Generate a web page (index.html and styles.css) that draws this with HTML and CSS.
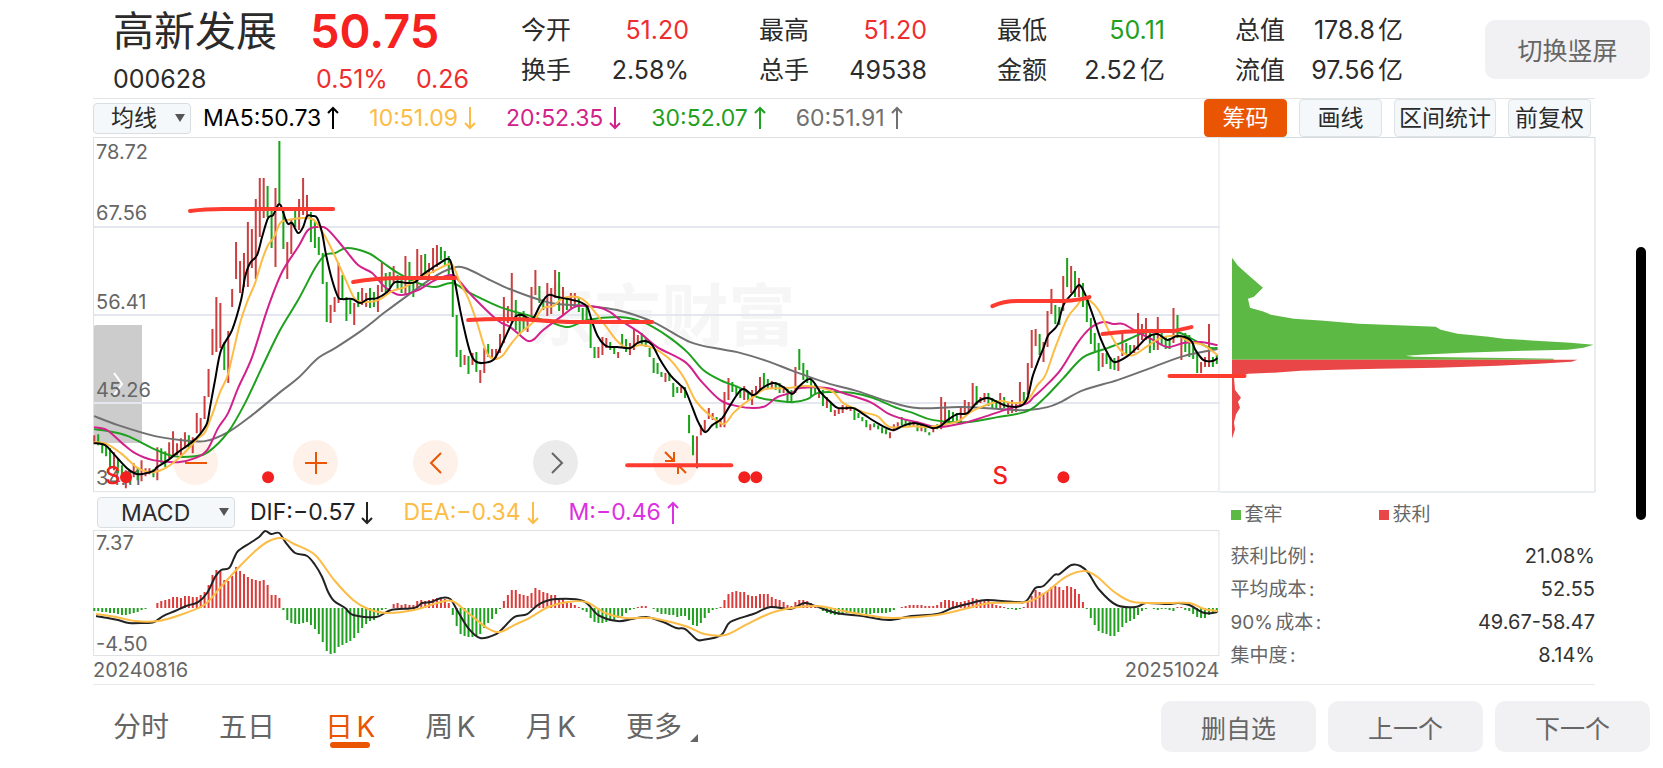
FILE: index.html
```html
<!DOCTYPE html>
<html lang="zh-CN">
  <head>
    <meta charset="UTF-8" />
    <meta name="viewport" content="width=device-width, initial-scale=1.0" />
    <title>高新发展 000628</title>
    <link rel="stylesheet" href="styles.css">
  </head>

  <body>
    <!-- 顶部行情 -->
    <header class="header">
      <div class="stock">
        <h1 class="stock__name">高新发展</h1>
        <strong class="stock__price">50.75</strong>
        <span class="stock__code">000628</span>
        <span class="stock__change"><span>0.51%</span><span>0.26</span></span>
      </div>
      <dl class="quotes">
        <div class="quote"><dt>今开</dt><dd class="up">51.20</dd></div>
        <div class="quote"><dt>最高</dt><dd class="up">51.20</dd></div>
        <div class="quote"><dt>最低</dt><dd class="down">50.11</dd></div>
        <div class="quote"><dt>总值</dt><dd>178.8亿</dd></div>
        <div class="quote"><dt>换手</dt><dd>2.58%</dd></div>
        <div class="quote"><dt>总手</dt><dd>49538</dd></div>
        <div class="quote"><dt>金额</dt><dd>2.52亿</dd></div>
        <div class="quote"><dt>流值</dt><dd>97.56亿</dd></div>
      </dl>
      <button type="button" class="btn btn--rotate">切换竖屏</button>
    </header>

    <main class="main">
      <!-- 均线栏 -->
      <div class="bar bar--top">
        <div class="picker">
          <select id="ma" aria-label="主图指标">
            <option>均线</option>
            <option>BOLL</option>
          </select>
        </div>
        <ul class="values">
          <li class="ma5">MA5:50.73<svg class="arrow" viewBox="0 0 12 24"><path d="M6 23V2M1 7l5-5 5 5" /></svg></li>
          <li class="ma10">10:51.09<svg class="arrow" viewBox="0 0 12 24"><path d="M6 1v21M1 17l5 5 5-5" /></svg></li>
          <li class="ma20">20:52.35<svg class="arrow" viewBox="0 0 12 24"><path d="M6 1v21M1 17l5 5 5-5" /></svg></li>
          <li class="ma30">30:52.07<svg class="arrow" viewBox="0 0 12 24"><path d="M6 23V2M1 7l5-5 5 5" /></svg></li>
          <li class="ma60">60:51.91<svg class="arrow" viewBox="0 0 12 24"><path d="M6 23V2M1 7l5-5 5 5" /></svg></li>
        </ul>
        <div class="actions">
          <button type="button" class="chip chip--active">筹码</button>
          <button type="button" class="chip">画线</button>
          <button type="button" class="chip chip--wide">区间统计</button>
          <button type="button" class="chip">前复权</button>
        </div>
      </div>

      <div class="board">
        <section class="charts">
          <!-- K线图 -->
          <div class="kline">
            <button type="button" class="drawer" aria-label="展开">
              <svg viewBox="0 0 12 24"><path d="M2 1l8 11-8 11" /></svg>
            </button>
            <div class="tools">
              <button type="button" class="tool" aria-label="缩小"><svg viewBox="0 0 24 24"><path d="M1 12h22" /></svg></button>
              <button type="button" class="tool" aria-label="放大"><svg viewBox="0 0 24 24"><path d="M1 12h22M12 1v22" /></svg></button>
              <button type="button" class="tool" aria-label="左移"><svg viewBox="0 0 24 24"><path d="M17 2L7 12l10 10" /></svg></button>
              <button type="button" class="tool tool--off" aria-label="右移"><svg viewBox="0 0 24 24"><path d="M8 2l10 10L8 22" /></svg></button>
              <button type="button" class="tool" aria-label="退出全屏"><svg viewBox="0 0 24 24"><path d="M1 1l8 8M10 1v9H1M22 22l-8-8M14 23v-9h9" /></svg></button>
            </div>
            <svg class="plot" viewBox="0 0 1126 354">
              <text class="watermark" x="434" y="203">东方财富</text>
              <path class="grid" d="M0 90H1126M0 178H1126M0 266H1126" />
              <rect class="frame" x="0.5" y="0.5" width="1125" height="354" />
              <g class="axis">
                <text x="3" y="22">78.72</text>
                <text x="3" y="83">67.56</text>
                <text x="3" y="172">56.41</text>
                <text x="3" y="260">45.26</text>
                <text x="3" y="348">34.11</text>
              </g>
              <path id="candle-up" class="candle candle--up" />
              <path id="candle-down" class="candle candle--down" />
              <path id="ma60" class="line ma60" />
              <path id="ma30" class="line ma30" />
              <path id="ma20" class="line ma20" />
              <path id="ma10" class="line ma10" />
              <path id="ma5" class="line ma5" />
              <g class="signal">
                <circle cx="33" cy="340" r="6" />
                <circle cx="175" cy="340" r="6" />
                <circle cx="651" cy="340" r="6" />
                <circle cx="663" cy="340" r="6" />
                <circle cx="970" cy="340" r="6" />
                <text x="12" y="347">S</text>
                <text x="899" y="347">S</text>
              </g>
              <!-- 手绘支撑/压力线 -->
              <g class="stroke">
                <path d="M97 74Q112 72 130 72H240" />
                <path d="M260 145Q282 141 310 141H362" />
                <path d="M375 183Q410 181 440 183T480 185H559" />
                <path d="M534 328H638" />
                <path d="M899 169Q910 164 924 164H970Q986 163 996 160" />
                <path d="M1009 197Q1034 194 1050 194H1080L1098 190" />
                <path d="M1076 239H1151" />
              </g>
            </svg>
          </div>

          <!-- MACD栏 -->
          <div class="bar bar--macd">
            <div class="picker picker--wide">
              <select id="sub" aria-label="副图指标">
                <option>MACD</option>
                <option>KDJ</option>
              </select>
            </div>
            <ul class="values">
              <li class="dif">DIF:−0.57<svg class="arrow" viewBox="0 0 12 24"><path d="M6 1v21M1 17l5 5 5-5" /></svg></li>
              <li class="ma10">DEA:−0.34<svg class="arrow" viewBox="0 0 12 24"><path d="M6 1v21M1 17l5 5 5-5" /></svg></li>
              <li class="macd">M:−0.46<svg class="arrow" viewBox="0 0 12 24"><path d="M6 23V2M1 7l5-5 5 5" /></svg></li>
            </ul>
          </div>
          <svg class="plot" viewBox="0 0 1126 126">
            <rect class="frame" x="0.5" y="0.5" width="1125" height="125" />
            <path id="macd-up" class="macd-bar macd-bar--up" />
            <path id="macd-down" class="macd-bar macd-bar--down" />
            <path id="dif" class="line dif" />
            <path id="dea" class="line ma10" />
            <g class="axis">
              <text x="3" y="20">7.37</text>
              <text x="3" y="121">-4.50</text>
            </g>
          </svg>
          <div class="dates"><span>20240816</span><span>20251024</span></div>
        </section>

        <!-- 筹码分布 -->
        <aside class="chips">
          <svg class="plot plot--chips" viewBox="0 0 376 355">
            <path class="frame frame--side" d="M0 0.5H375.5V355.5H0" />
            <polygon class="trapped" points="12,121 18,129 28,138 43,151 34,160 28,162 30,171 44,175 51,178 74,182 104,184 139,187 191,189 216,190 221,193 238,197 269,200 284,202 316,204 351,206 374,208 364,211 348,213 303,214 243,216 201,218 186,219 194,220 266,221 334,222 334,223 12,223" />
            <polygon class="profit" points="12,223 358,223 352,225 319,227 299,228 278,229 218,231 159,232 116,233 81,234 54,236 28,237 14,241 15,253 21,261 18,265 20,271 16,278 14,286 15,293 12,302" />
          </svg>
          <ul class="legend">
            <li><i class="dot dot--trapped"></i>套牢</li>
            <li><i class="dot dot--profit"></i>获利</li>
          </ul>
          <dl class="stats">
            <div><dt>获利比例:</dt><dd>21.08%</dd></div>
            <div><dt>平均成本:</dt><dd>52.55</dd></div>
            <div><dt>90%成本:</dt><dd>49.67-58.47</dd></div>
            <div><dt>集中度:</dt><dd>8.14%</dd></div>
          </dl>
        </aside>
      </div>
    </main>

    <!-- 底部导航 -->
    <footer class="footer">
      <nav class="tabs">
        <a href="#min">分时</a>
        <a href="#five">五日</a>
        <a href="#day" class="active">日K</a>
        <a href="#week">周K</a>
        <a href="#month">月K</a>
        <a href="#more" class="more">更多</a>
      </nav>
      <div class="footer__btns">
        <button type="button" class="btn">删自选</button>
        <button type="button" class="btn">上一个</button>
        <button type="button" class="btn">下一个</button>
      </div>
    </footer>

    <div class="home-indicator"></div>

    <script src="script.js"></script>
  </body>
</html>
```

FILE: styles.css
```css
* {
  box-sizing: border-box;
}

body {
  font-family: Inter, "Noto Sans CJK SC", sans-serif;
  margin: 0;
  color: #2b2b2b;
  background-color: #fff;
  text-autospace: normal;
}

h1,
ul,
dl,
dd {
  margin: 0;
  padding: 0;
}

ul {
  list-style: none;
}

button,
select {
  font: inherit;
  color: inherit;
  border: none;
  padding: 0;
  cursor: pointer;
}

svg {
  display: block;
  fill: none;
}

.up {
  color: #ee2e2e;
}

.down {
  color: #1fa01f;
}

/* 顶部行情 */
.header {
  display: flex;
  align-items: center;
  height: 98px;
  padding: 0 13px 0 113px;
}

.stock {
  flex: 0 0 408px;
  display: grid;
  grid-template-columns: 197px 1fr;
  grid-template-rows: 60px 36px;
  align-items: center;
}

.stock__name {
  font-size: 41px;
  line-height: 60px;
  font-weight: 400;
}

.stock__price {
  font-size: 47px;
  line-height: 60px;
  font-weight: 600;
  color: #f5221f;
}

.stock__code {
  font-size: 25px;
}

.stock__change {
  display: flex;
  gap: 28px;
  padding-left: 6px;
  font-size: 25px;
  color: #ee2e2e;
}

.quotes {
  flex: 1;
  display: grid;
  grid-template-columns: repeat(4, 1fr);
  column-gap: 70px;
  margin-right: 82px;
  padding-top: 2px;
  font-size: 25px;
  line-height: 40px;
}

.quote {
  display: flex;
  justify-content: space-between;
}

.btn {
  width: 155px;
  height: 51px;
  border-radius: 10px;
  background-color: #f1f1f3;
  color: #666;
  font-size: 25px;
}

.btn--rotate {
  width: 165px;
  height: 59px;
}

/* 指标栏 */
.main {
  margin: 0 68px 0 93px;
  border-top: 1px solid #e3e4e6;
  border-bottom: 1px solid #e8e8e8;
}

.bar {
  display: flex;
  align-items: center;
  font-size: 23px;
}

.bar--top {
  height: 38px;
}

.bar--macd {
  height: 39px;
  padding: 6px 4px 0;
  align-items: flex-start;
}

.picker {
  position: relative;
  width: 98px;
}

.picker--wide {
  width: 138px;
}

.picker select {
  display: block;
  width: 100%;
  height: 31px;
  padding: 0 24px 0 17px;
  border: 1px solid #d9dee2;
  border-radius: 4px;
  background-color: #f4f8fa;
  line-height: 28px;
  appearance: none;
}

.picker--wide select {
  padding-left: 23px;
}

.picker::after {
  content: "";
  position: absolute;
  right: 6px;
  top: 11px;
  border: 5px solid transparent;
  border-top: 8px solid #555;
  border-bottom: none;
  pointer-events: none;
}

.values {
  display: flex;
  gap: 30px;
  margin-left: 12px;
}

.bar--macd .values {
  margin-left: 15px;
}

.values li {
  display: flex;
  align-items: center;
  gap: 6px;
  line-height: 31px;
}

.arrow {
  width: 12px;
  height: 24px;
  stroke: currentColor;
  stroke-width: 2;
}

.ma5 {
  color: #000;
}

.ma10 {
  color: #fcbc45;
}

.ma20 {
  color: #d3218b;
}

.ma30 {
  color: #1fa01f;
}

.ma60 {
  color: #707070;
}

.dif {
  color: #222;
}

.macd {
  color: #dc2fe0;
}

.actions {
  display: flex;
  gap: 12px;
  margin-left: auto;
  padding-right: 4px;
}

.chip {
  width: 83px;
  height: 38px;
  border: 1px solid #dde2e5;
  border-radius: 4px;
  background-color: #f4f8fa;
  line-height: 34px;
  white-space: nowrap;
}

.chip--wide {
  width: 102px;
}

.chip--active {
  border-color: #ea5504;
  background-color: #ea5504;
  color: #fff;
}

/* 图表 */
.board {
  display: grid;
  grid-template-columns: 3fr 1fr;
}

.kline {
  position: relative;
}

.plot {
  position: relative;
  width: 100%;
  overflow: visible;
  pointer-events: none;
}

.kline .plot {
  z-index: 1;
}

.grid {
  stroke: #e4e8ee;
  stroke-width: 2;
}

.frame {
  stroke: #dfe2e4;
}

.frame--side {
  stroke: #d5dcdf;
}

.axis {
  fill: #666;
  font-size: 20px;
}

.watermark {
  fill: #f6f6f6;
  font-size: 67px;
  font-weight: 700;
}

.candle {
  stroke-width: 2;
}

.candle--up {
  stroke: #cb3f40;
}

.candle--down {
  stroke: #18a418;
}

.line {
  stroke: currentColor;
  stroke-width: 2;
  stroke-linejoin: round;
}

.signal {
  fill: #f32020;
  font-size: 24px;
  font-weight: 500;
}

.stroke {
  stroke: #ff3b30;
  stroke-width: 4;
  stroke-linecap: round;
}

.macd-bar {
  stroke-width: 2;
}

.macd-bar--up {
  stroke: #dd3a3a;
}

.macd-bar--down {
  stroke: #1fa01f;
}

.drawer {
  position: absolute;
  left: 0;
  top: 188px;
  width: 49px;
  height: 118px;
  border-radius: 4px 0 0 4px;
  background-color: #ccc;
}

.drawer svg {
  width: 12px;
  height: 24px;
  margin: 0 auto;
  stroke: #fff;
  stroke-width: 2;
}

.tools {
  position: absolute;
  left: 80px;
  bottom: 6px;
  display: flex;
  gap: 75px;
}

.tool {
  display: flex;
  align-items: center;
  justify-content: center;
  width: 45px;
  height: 45px;
  border-radius: 50%;
  background-color: #fef1ea;
  color: #ea5504;
}

.tool--off {
  background-color: #ebebeb;
  color: #666;
}

.tool svg {
  width: 24px;
  height: 24px;
  stroke: currentColor;
  stroke-width: 2;
}

.dates {
  display: flex;
  justify-content: space-between;
  font-size: 20px;
  line-height: 28px;
  color: #666;
}

/* 筹码分布 */
.chips {
  font-size: 19px;
  color: #666;
}

.trapped {
  fill: #5cb944;
}

.profit {
  fill: #e94747;
}

.legend {
  display: grid;
  grid-template-columns: 148px 1fr;
  padding: 9px 0 0 11px;
  line-height: 28px;
}

.legend li {
  display: flex;
  align-items: center;
  gap: 4px;
}

.dot {
  width: 10px;
  height: 10px;
}

.dot--trapped {
  background-color: #5cb944;
}

.dot--profit {
  background-color: #e94747;
}

.stats {
  padding: 11px 0 0 11px;
  line-height: 33px;
}

.stats div {
  display: flex;
  justify-content: space-between;
}

.stats dd {
  font-size: 20px;
  color: #333;
}

/* 底部导航 */
.footer {
  display: flex;
  align-items: center;
  justify-content: space-between;
  height: 83px;
  padding: 0 13px 0 113px;
}

.tabs {
  display: flex;
  gap: 50px;
  font-size: 28px;
  line-height: 42px;
}

.tabs a {
  position: relative;
  color: #666;
  text-decoration: none;
}

.tabs .active {
  color: #ea5504;
}

.tabs .active::after {
  content: "";
  position: absolute;
  left: 5px;
  right: 5px;
  bottom: 0;
  height: 6px;
  border-radius: 3px;
  background-color: #ea5504;
}

.tabs .more::after {
  content: "";
  position: absolute;
  left: 100%;
  bottom: 6px;
  margin-left: 8px;
  border-left: 8px solid transparent;
  border-bottom: 8px solid #666;
}

.footer__btns {
  display: flex;
  gap: 12px;
}

.home-indicator {
  position: absolute;
  right: 17px;
  top: 247px;
  width: 10px;
  height: 273px;
  border-radius: 5px;
  background-color: #000;
}
```

FILE: script.js
```js
// 每根K线的间距和起点
const STEP = 3.937;
const START = 1.3;

// K线数据：颜色(r涨 g跌) + 最高 + 最低
const candles = `
r298-307 g297-308 g305-316 g309-319 g311-330 r315-333 g321-336 g328-342 r333-351 g335-346
r326-340 g330-343 r323-344 r331-339 r331-337 g332-340 r310-343 g311-326 g314-330 r305-321
r294-318 r306-318 r301-318 r295-311 g298-311 r300-316 r276-296 r281-296 r259-282 r232-260
r192-218 r160-215 r166-211 g205-233 r194-246 r152-170 r105-142 r124-156 r116-150 r85-150
r92-131 r62-142 r41-100 r41-81 g49-80 g73-111 r51-130 g4-66 g73-112 r105-142
r83-117 g73-90 r62-93 r41-78 r58-80 g75-105 g85-111 g100-118 g116-147 g145-185
r168-186 r160-175 r126-166 g138-163 g160-184 g163-177 r166-188 g155-170 r151-168 r156-170
g151-171 g155-170 r148-175 r126-155 g136-155 g135-150 r129-146 g138-153 g140-156 r119-158
g125-156 g140-160 r112-153 r118-140 g117-143 r126-140 r111-136 r108-130 g110-123 g114-128
g119-143 g140-180 g178-220 g213-230 r218-228 g219-237 r216-228 g215-235 r233-246 r211-236
g207-220 r212-222 r212-223 r197-216 r160-206 r169-186 r136-186 g163-193 g176-198 g174-193
r180-195 r150-183 r133-158 g149-166 g162-173 r146-179 r151-177 r133-161 g135-174 r150-178
g161-173 r156-171 r156-170 g161-175 g171-183 g169-186 g185-211 g210-221 r210-221 r200-218
r201-211 g205-213 g210-217 r215-221 g197-211 g202-215 r206-218 r192-213 r198-206 g196-208
g201-210 g211-220 g221-236 g226-237 g235-240 r236-245 g236-244 g246-260 g250-256 r250-256
g250-261 g278-296 g298-318 r299-331 r288-298 r283-295 r271-282 r276-283 g280-291 r281-290
r255-290 r241-263 g245-255 g250-258 g252-261 r249-263 g255-263 r253-268 r249-258 r240-255
g236-250 g242-251 r244-251 g245-253 g246-256 r249-256 g252-266 g253-266 r230-256 g212-233
g226-243 g233-246 g241-259 g246-258 r250-261 g253-269 r260-271 g265-275 r273-279 r271-277
r268-276 r269-273 r269-274 g270-283 g276-281 g280-284 g283-290 r287-293 g286-290 g288-292
g290-296 g292-297 r295-301 r287-294 r285-290 g280-288 g282-288 g284-289 r284-289 g286-294
r287-294 g289-295 g295-298 r289-295 g287-292 r260-292 r265-288 g273-286 g275-284 g276-284
r271-285 r263-278 r265-276 r246-271 g249-268 r260-266 r256-265 g256-269 g261-271 g263-271
r256-271 g260-271 r265-277 r263-276 r266-275 r245-270 g255-266 r226-258 r193-231 r192-209
g197-218 r205-225 r174-210 r152-177 g168-187 g170-188 r139-174 g121-150 r129-156 g134-160
r141-160 g146-170 g163-185 g181-207 g196-214 g206-234 r216-230 g216-227 g220-232 g221-233
r219-234 r197-219 g206-218 g208-216 r208-216 r176-213 r187-203 r181-203 g196-216 g198-213
r180-213 g195-208 g200-212 g201-212 r171-206 g178-201 r200-223 g196-215 g198-220 g206-222
g216-236 r225-236 r220-230 r187-230 g220-230 g218-227
`;

// MACD柱
const macd = [
  -3, -3, -4, -4, -5, -5, -6, -7, -7, -6, -5, -4, -2, -1, 0, 0, 5, 7, 8, 9,
  11, 11, 10, 12, 12, 11, 11, 13, 16, 23, 33, 38, 37, 28, 27, 32, 41, 37, 34, 31,
  29, 28, 27, 28, 23, 13, 13, 10, -2, -12, -15, -16, -16, -15, -14, -17, -21, -26, -34, -43,
  -46, -45, -39, -37, -35, -33, -30, -25, -20, -16, -13, -12, -7, -2, -1, 0, 4, 5, 3, 4,
  3, 3, 7, 8, 7, 8, 9, 10, 9, 9, 5, -7, -18, -26, -28, -29, -29, -28, -26, -20,
  -15, -11, -6, -1, 7, 13, 18, 18, 14, 13, 12, 15, 20, 18, 16, 15, 13, 13, 10, 9,
  6, 5, 3, 1, -2, -4, -10, -14, -15, -15, -14, -13, -12, -10, -8, -5, -2, -1, 1, 2,
  2, 0, -1, -4, -6, -6, -7, -7, -9, -8, -8, -12, -17, -18, -15, -10, -5, -2, -1, 1,
  8, 14, 16, 17, 16, 16, 13, 12, 12, 14, 14, 14, 11, 9, 8, 6, 3, 2, 6, 8,
  8, 7, 5, 3, 1, -3, -5, -6, -7, -7, -6, -5, -5, -6, -6, -5, -6, -6, -5, -5,
  -5, -5, -4, -2, 0, 1, 2, 3, 3, 3, 3, 2, 2, 2, 3, 6, 8, 8, 7, 6,
  6, 7, 8, 10, 9, 8, 8, 9, 5, 3, 2, 1, -1, -1, -2, -1, 1, 7, 12, 18,
  16, 15, 17, 21, 22, 21, 18, 22, 21, 19, 14, 6, -1, -10, -17, -23, -25, -26, -28, -28,
  -24, -19, -15, -13, -11, -7, -3, -1, 0, -1, -2, -1, -1, -2, -3, 1, 1, -2, -3, -6,
  -9, -10, -10, -7, -5, -4,
];

// 均线和DIF/DEA
const lines = {
  ma5: "1,306 12,308 20,316 34,331 45,337 60,334 64,330 75,323 85,315 99,305 107,297 114,286 117,270 122,243 128,213 139,193 148,163 152,140 157,126 164,118 169,100 175,81 180,78 185,68 188,69 192,81 195,87 199,86 205,96 210,90 214,79 219,79 224,81 229,96 233,118 239,143 245,160 249,162 259,162 267,166 275,162 284,161 294,155 302,145 314,146 322,145 329,138 339,131 345,127 356,122 360,136 367,173 372,196 377,215 382,224 389,226 400,223 407,211 414,196 422,180 429,178 439,182 447,168 455,158 464,160 475,162 487,165 494,170 499,185 505,200 513,209 524,210 537,211 544,206 552,204 559,208 567,223 577,238 587,248 592,253 599,270 605,285 612,295 619,288 629,281 637,268 649,252 660,258 669,251 680,246 690,250 699,257 705,250 717,242 727,255 737,265 745,271 760,271 770,277 784,286 799,293 809,289 819,286 830,288 840,291 847,289 854,283 864,277 874,276 884,265 894,261 904,265 914,269 927,269 934,261 939,240 944,226 950,211 955,198 964,188 970,168 980,155 986,148 992,158 1000,180 1007,201 1014,216 1021,225 1034,219 1044,210 1054,200 1064,197 1074,203 1084,199 1097,203 1102,213 1110,223 1119,224 1124,221",
  ma10: "1,305 14,307 29,317 45,331 60,335 74,330 89,318 105,301 112,295 120,275 127,255 134,240 139,220 147,186 154,165 162,146 169,123 175,108 181,100 187,86 194,83 209,81 219,82 225,88 235,105 245,126 254,146 262,162 272,165 285,163 299,154 312,150 325,141 339,135 356,127 361,131 367,146 375,161 384,186 390,206 395,218 402,222 409,219 417,208 427,196 439,186 450,171 460,169 470,161 484,160 494,166 504,178 514,191 524,204 534,211 547,208 560,211 574,220 584,231 592,243 602,263 614,276 630,287 640,276 649,268 660,260 672,252 694,251 710,249 724,250 740,255 750,266 770,275 784,279 797,290 820,289 834,290 847,288 865,284 877,275 890,269 907,264 920,266 934,263 944,248 952,238 962,210 974,181 984,168 989,162 997,164 1005,173 1014,191 1022,206 1030,216 1040,218 1054,209 1067,201 1084,199 1097,205 1110,208 1124,218",
  ma20: "1,290 14,293 29,306 42,316 60,323 85,325 102,321 114,313 125,291 135,276 145,251 159,220 174,173 189,135 205,110 215,93 225,90 234,92 250,110 265,128 279,136 292,150 307,158 325,153 342,143 359,138 367,145 380,160 404,183 417,190 429,200 435,204 441,202 450,193 470,178 484,169 504,170 517,175 527,183 547,196 564,210 592,225 607,243 627,263 644,269 660,271 672,269 684,260 700,255 707,251 734,251 750,256 777,265 794,276 810,282 824,285 844,290 870,286 890,280 914,272 934,266 940,260 950,251 967,233 984,206 997,191 1010,185 1020,187 1030,187 1044,195 1060,203 1074,210 1090,206 1107,205 1124,208",
  ma30: "1,292 15,294 35,299 59,311 80,319 102,319 115,315 135,295 152,266 169,230 187,193 205,163 222,131 232,118 242,116 254,111 275,116 289,125 305,136 325,146 342,150 359,146 377,156 407,170 434,178 457,185 475,190 494,183 524,180 544,183 560,190 577,201 594,215 610,233 627,243 647,251 664,260 680,263 700,265 714,262 724,256 740,255 760,256 780,261 804,271 820,276 840,283 874,285 904,280 934,274 952,260 970,241 990,220 1014,211 1027,206 1047,197 1065,193 1084,195 1097,201 1114,210 1124,211",
  ma60: "1,279 25,288 62,299 89,303 112,304 135,295 159,278 187,255 205,241 225,221 242,211 269,193 292,175 315,158 339,141 359,131 372,131 397,143 414,151 447,163 464,167 494,169 524,173 560,185 597,205 627,212 644,215 674,224 700,234 734,246 764,254 794,264 824,271 867,270 907,272 934,273 954,270 967,265 990,253 1024,243 1057,231 1090,219 1124,212",
  dif: "3,86 15,88 25,90 36,93 49,93 61,92 70,86 82,81 93,76 105,72 114,63 122,47 128,40 136,38 141,28 145,21 157,13 166,7 172,1 178,4 186,3 193,13 202,23 214,26 222,35 229,47 235,62 241,71 252,78 260,85 283,87 298,80 321,78 329,73 338,72 348,68 357,69 365,82 375,98 387,108 403,104 411,97 421,87 434,84 446,74 463,69 490,71 505,85 524,91 539,89 553,87 570,92 583,98 592,99 603,109 609,110 628,105 637,92 660,84 677,77 697,79 711,73 722,76 743,83 769,86 795,90 818,86 844,84 859,78 878,73 893,70 923,72 933,71 942,58 950,56 961,45 966,44 978,35 987,36 995,43 1006,60 1023,75 1042,77 1053,73 1074,74 1085,73 1096,75 1111,83 1124,82",
  dea: "3,84 23,87 42,91 65,91 84,86 111,75 126,59 145,38 160,23 174,12 188,8 201,14 222,25 241,50 260,70 275,79 294,83 321,80 344,73 359,71 375,83 394,98 407,102 421,95 436,88 455,77 474,72 493,72 512,83 532,88 558,88 592,96 611,104 632,105 656,93 684,81 722,76 750,81 773,85 799,88 844,85 871,79 897,73 933,72 953,62 972,47 991,41 1004,47 1021,62 1040,72 1074,73 1096,73 1111,79 1124,81",
};

// 把折线点转换成平滑曲线
function smooth(text) {
  const points = text.split(" ").map((item) => item.split(",").map(Number));
  let d = `M${points[0]}`;
  for (let i = 0; i < points.length - 1; i++) {
    const prev = points[i - 1] || points[i];
    const [x1, y1] = points[i];
    const [x2, y2] = points[i + 1];
    const next = points[i + 2] || points[i + 1];
    const c1 = [x1 + (x2 - prev[0]) / 6, y1 + (y2 - prev[1]) / 6];
    const c2 = [x2 - (next[0] - x1) / 6, y2 - (next[1] - y1) / 6];
    d += `C${c1} ${c2} ${x2},${y2}`;
  }
  return d;
}

// 画K线
const paths = { r: "", g: "" };
candles.trim().split(/\s+/).forEach((item, i) => {
  const [high, low] = item.slice(1).split("-");
  const x = (START + i * STEP).toFixed(1);
  paths[item[0]] += `M${x} ${high}V${low}`;
});
document.querySelector("#candle-up").setAttribute("d", paths.r);
document.querySelector("#candle-down").setAttribute("d", paths.g);

// 画MACD柱，零轴在78
let up = "";
let down = "";
macd.forEach((value, i) => {
  const x = (START + i * STEP).toFixed(1);
  const bar = `M${x} 78v${-value}`;
  if (value > 0) {
    up += bar;
  } else if (value < 0) {
    down += bar;
  }
});
document.querySelector("#macd-up").setAttribute("d", up);
document.querySelector("#macd-down").setAttribute("d", down);

// 画曲线
Object.keys(lines).forEach((id) => {
  document.querySelector("#" + id).setAttribute("d", smooth(lines[id]));
});
```
